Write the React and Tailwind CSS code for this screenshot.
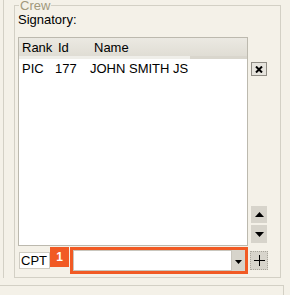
import React from "react";

function Tri({ up = true, w = 9, h = 5 }) {
  return (
    <svg width={w} height={h} viewBox={`0 0 ${w} ${h}`}>
      {up ? (
        <polygon points={`0,${h} ${w},${h} ${w / 2},0`} fill="#000" />
      ) : (
        <polygon points={`0,0 ${w},0 ${w / 2},${h}`} fill="#000" />
      )}
    </svg>
  );
}

export default function App() {
  return (
    <div className="w-[290px] h-[295px] bg-[#f4f1e8] overflow-hidden flex flex-col font-['Liberation_Sans',Arial,sans-serif] text-[13px] text-black">
      <div className="flex h-[278px] shrink-0">
        <div className="w-[4px] h-[278px] border-r border-[#d3d0c5]" />
        <div className="ml-[10px] mt-[5px] w-[267px] h-[273px] border border-[#d3d0c5] relative">
          <span className="absolute left-[4px] top-[-8px] px-[1px] bg-[#f4f1e8] leading-[15px] text-[#a1987c]">
            Crew
          </span>
          <div className="pl-[3px] pt-[6px] flex flex-col">
            <div className="leading-[15px] h-[15px]">Signatory:</div>
            <div className="mt-[10px] flex">
              <div className="w-[230px] h-[209px] border border-[#bcb9ae] bg-white flex flex-col">
                <div className="h-[21px] flex flex-col bg-[linear-gradient(#ebe9e2,#dedbd2)]">
                  <div className="flex-1 flex items-center leading-[15px]">
                    <div className="w-[36px] pl-[3px]">Rank</div>
                    <div className="w-[36px] pl-[3px]">Id</div>
                    <div className="pl-[3px]">Name</div>
                  </div>
                  <div className="h-[3px] flex">
                    <div className="w-[171px] bg-[#efeee9]" />
                    <div className="flex-1 bg-[#d9d6cd]" />
                  </div>
                </div>
                <div className="h-[19px] flex items-center leading-[15px]">
                  <div className="w-[33px] pl-[3px]">PIC</div>
                  <div className="w-[35px] pl-[3px]">177</div>
                  <div className="pl-[3px]">JOHN SMITH JS</div>
                </div>
              </div>
              <div className="ml-[3px] w-[16px] h-[209px] flex flex-col pt-[25px] pb-[3px]">
                <div className="w-[16px] h-[14px] border border-[#8f8c84] bg-[#e6e4dd] flex items-center justify-center">
                  <svg width="8" height="7" viewBox="0 0 8 7">
                    <path d="M1 0.5 L7 6.5 M7 0.5 L1 6.5" stroke="#000" strokeWidth="2" />
                  </svg>
                </div>
                <div className="flex-1" />
                <div className="w-[16px] h-[17px] bg-[#d7d4cb] flex items-center justify-center">
                  <Tri up w={9} h={5} />
                </div>
                <div className="mt-[2px] w-[16px] h-[18px] bg-[#d7d4cb] flex items-center justify-center">
                  <Tri up={false} w={9} h={5} />
                </div>
              </div>
            </div>
            <div className="mt-[1px] flex items-start">
              <div className="ml-[1px] mt-[5px] w-[31px] h-[17px] border border-[#cfccc3] bg-white leading-[15px] pl-[1px]">
                CPT
              </div>
              <div className="w-[19px] h-[20px] bg-[#f15a24] text-white font-bold text-[12px] flex items-center justify-center">
                1
              </div>
              <div className="ml-[1px] w-[178px] h-[27px] border-[3px] border-[#f15a24] flex">
                <div className="flex-1 border border-[#c9c6bd] bg-white" />
                <div className="w-[13px] bg-[#d7d4cb] flex items-center justify-center pt-[2px]">
                  <Tri up={false} w={7} h={4} />
                </div>
              </div>
              <div className="ml-[2px] mt-[4px] w-[18px] h-[19px] bg-[#d7d4cb] border border-dotted border-[#a8a59b] flex items-center justify-center">
                <svg width="11" height="11" viewBox="0 0 11 11">
                  <path d="M5.5 0 V11 M0 5.5 H11" stroke="#000" strokeWidth="1" />
                </svg>
              </div>
            </div>
          </div>
        </div>
      </div>
      <div className="mt-[7px] w-[284px] h-[20px] border-t border-r border-[#d3d0c5] shrink-0" />
    </div>
  );
}
